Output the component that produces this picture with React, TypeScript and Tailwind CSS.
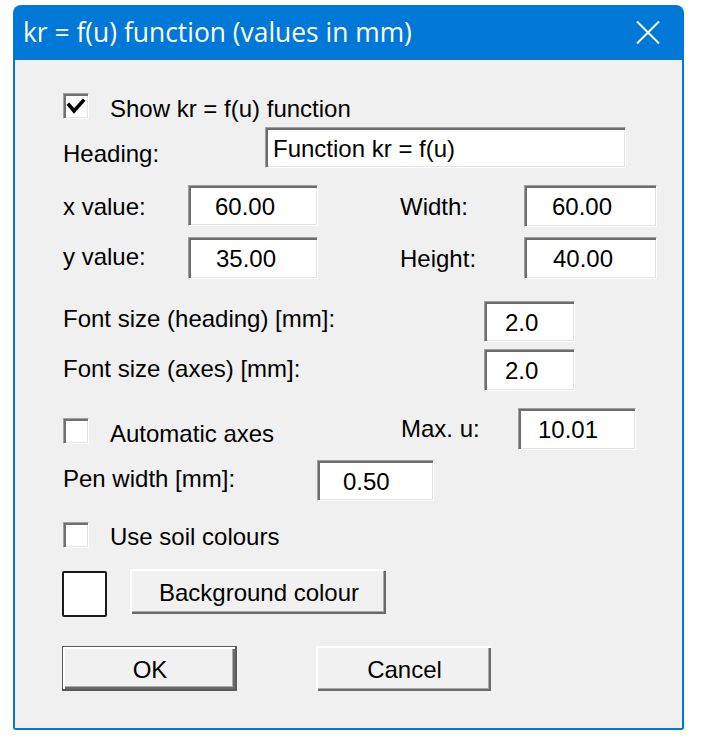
import React from "react";

const sunken =
  "flex items-center pt-[2px] bg-white border border-t-[#a0a0a0] border-l-[#a0a0a0] border-r-white border-b-white shadow-[inset_2px_2px_0_#6d6d6d,inset_-1px_-1px_0_#e3e3e3] text-black";

function Field({ cls, text }: { cls: string; text: string }) {
  return (
    <div className={`${sunken} ${cls}`}>
      <span className="whitespace-pre">{text}</span>
    </div>
  );
}

function Check({ checked, cls }: { checked?: boolean; cls?: string }) {
  return (
    <div
      className={`w-[26px] h-[26px] shrink-0 bg-white border border-t-[#a0a0a0] border-l-[#a0a0a0] border-r-white border-b-white shadow-[inset_2px_2px_0_#707070,inset_-1px_-1px_0_#e3e3e3] relative ${cls ?? ""}`}
    >
      {checked && (
        <svg className="absolute left-0 top-0" width="24" height="24" viewBox="0 0 24 24">
          <polyline points="5,11 10,17 19,7" fill="none" stroke="#000" strokeWidth="3.6" strokeLinecap="square" />
        </svg>
      )}
    </div>
  );
}

const raised =
  "flex items-center justify-center bg-[#f1f1f1] border-t-[2px] border-l-[2px] border-t-white border-l-white shadow-[inset_-2px_-2px_0_#6a6a6a,inset_-3px_-3px_0_#a9a9a9] pt-[1px]";

export default function App() {
  return (
    <div
      className="w-[703px] h-[744px] bg-white pl-[13px] pt-[5px] text-[24px] leading-[24px] text-black"
      style={{ fontFamily: '"Liberation Sans", Arial, sans-serif' }}
    >
      <div className="w-[671px] h-[725px] flex flex-col rounded-t-[8px] rounded-b-[3px] overflow-hidden bg-[#0078d7]">
        {/* Title bar */}
        <div className="h-[55px] shrink-0 flex items-start justify-between pl-[10px] pr-[24px]">
          <div
            className="pt-[14px] text-white text-[26.4px] leading-[26px] whitespace-nowrap"
            style={{ fontFamily: '"Open Sans", "Noto Sans", sans-serif' }}
          >
            kr = f(u) function (values in mm)
          </div>
          <svg className="mt-[16px]" width="24" height="23" viewBox="0 0 24 23">
            <line x1="1" y1="0.5" x2="23" y2="22.5" stroke="#fff" strokeWidth="2" />
            <line x1="23" y1="0.5" x2="1" y2="22.5" stroke="#fff" strokeWidth="2" />
          </svg>
        </div>

        {/* Body */}
        <div className="flex-1 mx-[2px] mb-[2px] bg-[#f0f0f0] pl-[48px] flex flex-col">
          {/* R1 */}
          <div className="mt-[33px] h-[26px] flex items-start">
            <Check checked />
            <span className="ml-[21px] mt-[4px]">Show kr = f(u) function</span>
          </div>

          {/* R2 Heading */}
          <div className="mt-[8px] h-[41px] flex items-start">
            <span className="w-[202px] mt-[15px]">Heading:</span>
            <Field cls="w-[361px] h-[41px] pl-[7px]" text="Function kr = f(u)" />
          </div>

          {/* R3 */}
          <div className="mt-[17px] h-[42px] flex items-start">
            <span className="w-[125px] mt-[10px]">x value:</span>
            <Field cls="w-[130px] h-[41px] pl-[26px]" text="60.00" />
            <span className="ml-[82px] w-[124px] mt-[10px]">Width:</span>
            <Field cls="w-[133px] h-[42px] pl-[27px]" text="60.00" />
          </div>

          {/* R4 */}
          <div className="mt-[10px] h-[42px] flex items-start">
            <span className="w-[125px] mt-[8px]">y value:</span>
            <Field cls="w-[130px] h-[42px] pl-[27px]" text="35.00" />
            <span className="ml-[82px] w-[124px] mt-[10px]">Height:</span>
            <Field cls="w-[133px] h-[42px] pl-[28px]" text="40.00" />
          </div>

          {/* R5 */}
          <div className="mt-[22px] h-[41px] flex items-start">
            <span className="w-[421px] mt-[6px]">Font size (heading) [mm]:</span>
            <Field cls="w-[91px] h-[41px] pl-[20px]" text="2.0" />
          </div>

          {/* R6 */}
          <div className="mt-[7px] h-[42px] flex items-start">
            <span className="w-[421px] mt-[8px]">Font size (axes) [mm]:</span>
            <Field cls="w-[91px] h-[42px] pl-[20px]" text="2.0" />
          </div>

          {/* R7 */}
          <div className="mt-[17px] h-[42px] flex items-start">
            <Check cls="mt-[10px]" />
            <span className="ml-[21px] w-[291px] mt-[14px]">Automatic axes</span>
            <span className="w-[117px] mt-[9px]">Max. u:</span>
            <Field cls="w-[118px] h-[42px] pl-[19px]" text="10.01" />
          </div>

          {/* R8 */}
          <div className="mt-[10px] h-[41px] flex items-start">
            <span className="w-[254px] mt-[7px]">Pen width [mm]:</span>
            <Field cls="w-[117px] h-[41px] pl-[25px]" text="0.50" />
          </div>

          {/* R9 */}
          <div className="mt-[21px] h-[27px] flex items-start">
            <Check />
            <span className="ml-[21px] mt-[3px]">Use soil colours</span>
          </div>

          {/* R10 */}
          <div className="mt-[20px] h-[48px] flex items-start -ml-[1px]">
            <div className="mt-[2px] w-[45px] h-[46px] bg-white border-[2px] border-[#1a1a1a] rounded-[2px]" />
            <div className={`${raised} ml-[23px] w-[256px] h-[45px]`}>Background colour</div>
          </div>

          {/* R11 */}
          <div className="mt-[29px] h-[45px] flex items-start -ml-[1px]">
            <div className="w-[175px] h-[45px] border border-[#5a5a5a] border-r-[2px] border-b-[2px]">
              <div className={`${raised} w-full h-full`}>OK</div>
            </div>
            <div className={`${raised} ml-[79px] w-[175px] h-[45px]`}>Cancel</div>
          </div>
        </div>
      </div>
    </div>
  );
}
